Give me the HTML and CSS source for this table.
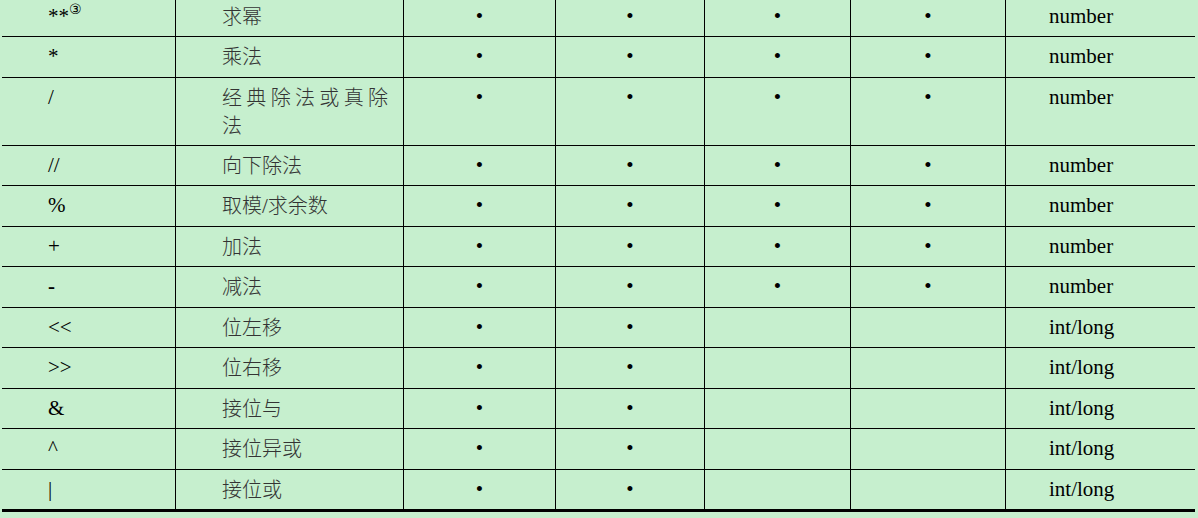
FILE: index.html
```html
<!DOCTYPE html>
<html lang="zh-CN">
<head>
<meta charset="utf-8">
<title>运算符</title>
<link rel="stylesheet" href="styles.css">
</head>
<body>
<div class="table">
  <div class="row first">
    <div class="cell op">**<sup class="note">③</sup></div>
    <div class="cell desc">求幂</div>
    <div class="cell dot">•</div><div class="cell dot">•</div><div class="cell dot">•</div><div class="cell dot">•</div>
    <div class="cell type">number</div>
  </div>
  <div class="row">
    <div class="cell op">*</div>
    <div class="cell desc">乘法</div>
    <div class="cell dot">•</div><div class="cell dot">•</div><div class="cell dot">•</div><div class="cell dot">•</div>
    <div class="cell type">number</div>
  </div>
  <div class="row tall">
    <div class="cell op">/</div>
    <div class="cell desc"><span class="spaced">经典除法或真除法</span></div>
    <div class="cell dot">•</div><div class="cell dot">•</div><div class="cell dot">•</div><div class="cell dot">•</div>
    <div class="cell type">number</div>
  </div>
  <div class="row">
    <div class="cell op">//</div>
    <div class="cell desc">向下除法</div>
    <div class="cell dot">•</div><div class="cell dot">•</div><div class="cell dot">•</div><div class="cell dot">•</div>
    <div class="cell type">number</div>
  </div>
  <div class="row">
    <div class="cell op">%</div>
    <div class="cell desc">取模<span class="lat">/</span>求余数</div>
    <div class="cell dot">•</div><div class="cell dot">•</div><div class="cell dot">•</div><div class="cell dot">•</div>
    <div class="cell type">number</div>
  </div>
  <div class="row">
    <div class="cell op">+</div>
    <div class="cell desc">加法</div>
    <div class="cell dot">•</div><div class="cell dot">•</div><div class="cell dot">•</div><div class="cell dot">•</div>
    <div class="cell type">number</div>
  </div>
  <div class="row">
    <div class="cell op minus">-</div>
    <div class="cell desc">减法</div>
    <div class="cell dot">•</div><div class="cell dot">•</div><div class="cell dot">•</div><div class="cell dot">•</div>
    <div class="cell type">number</div>
  </div>
  <div class="row">
    <div class="cell op">&lt;&lt;</div>
    <div class="cell desc">位左移</div>
    <div class="cell dot">•</div><div class="cell dot">•</div><div class="cell dot"></div><div class="cell dot"></div>
    <div class="cell type">int/long</div>
  </div>
  <div class="row">
    <div class="cell op">&gt;&gt;</div>
    <div class="cell desc">位右移</div>
    <div class="cell dot">•</div><div class="cell dot">•</div><div class="cell dot"></div><div class="cell dot"></div>
    <div class="cell type">int/long</div>
  </div>
  <div class="row">
    <div class="cell op">&amp;</div>
    <div class="cell desc">接位与</div>
    <div class="cell dot">•</div><div class="cell dot">•</div><div class="cell dot"></div><div class="cell dot"></div>
    <div class="cell type">int/long</div>
  </div>
  <div class="row">
    <div class="cell op">^</div>
    <div class="cell desc">接位异或</div>
    <div class="cell dot">•</div><div class="cell dot">•</div><div class="cell dot"></div><div class="cell dot"></div>
    <div class="cell type">int/long</div>
  </div>
  <div class="row last">
    <div class="cell op">|</div>
    <div class="cell desc">接位或</div>
    <div class="cell dot">•</div><div class="cell dot">•</div><div class="cell dot"></div><div class="cell dot"></div>
    <div class="cell type">int/long</div>
  </div>
</div>
</body>
</html>
```
FILE: styles.css
```css
html, body {
  margin: 0;
  padding: 0;
  background: #c6efce;
  overflow: hidden;
}
body {
  font-family: "Liberation Serif", Tinos, "Times New Roman", serif;
  font-size: 21px;
  color: #000;
}
.table {
  margin: -3.5px 3px 0 2px;
  width: 1193px;
}
.row {
  display: grid;
  grid-template-columns: 174px 228px 152px 149px 146px 155px 189px;
  height: 40.5px;
  box-sizing: border-box;
  border-bottom: 1px solid #000;
}
.row.tall {
  height: 68px;
}
.row.last {
  height: 42px;
  border-bottom: 3px solid #000;
}
.cell {
  box-sizing: border-box;
  border-right: 1px solid #000;
  padding-top: 5px;
  line-height: 28px;
  white-space: nowrap;
}
.cell:last-child {
  border-right: none;
}
.op {
  padding-left: 46px;
}
.minus {
  font-weight: bold;
}
.note {
  font-size: 14px;
  line-height: 0;
  vertical-align: 9px;
  font-family: "DejaVu Sans", sans-serif;
}
.desc {
  padding-left: 46px;
  font-family: "Noto Sans CJK SC", sans-serif;
  font-weight: 300;
  font-size: 20px;
  color: #333;
}
.lat {
  font-family: "Liberation Serif", serif;
  font-size: 21px;
}
.spaced {
  display: block;
  width: 180px;
  white-space: normal;
  letter-spacing: 4.33px;
}
.dot {
  text-align: center;
}
.type {
  padding-left: 43px;
}
```
